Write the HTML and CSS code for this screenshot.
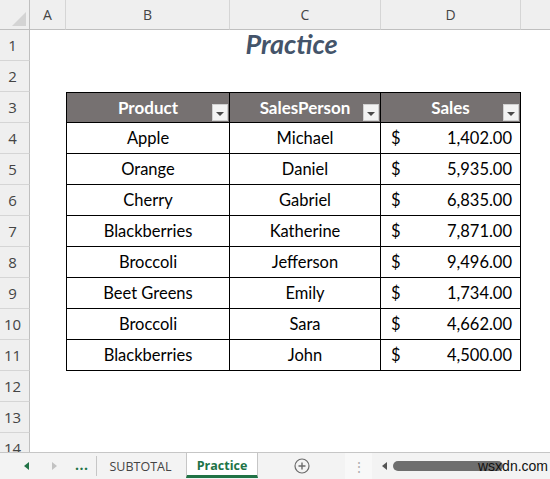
FILE: index.html
```html
<!DOCTYPE html>
<html>
<head>
<meta charset="utf-8">
<link rel="stylesheet" href="styles.css">
</head>
<body>
<div class="app">
  <div class="sheet">
    <div class="corner"><span class="tri"></span></div>
    <div class="colhead">A</div>
    <div class="colhead">B</div>
    <div class="colhead">C</div>
    <div class="colhead">D</div>
    <div class="colhead last"></div>

    <div class="rowhead">1</div>
    <div class="cell"></div>
    <div class="cell title">Practice</div>
    <div class="cell"></div>

    <div class="rowhead">2</div>
    <div class="cell full"></div>

    <div class="rowhead">3</div>
    <div class="cell"></div>
    <div class="th first">Product<span class="filter"></span></div>
    <div class="th">SalesPerson<span class="filter"></span></div>
    <div class="th">Sales<span class="filter"></span></div>
    <div class="cell"></div>

    <div class="rowhead">4</div>
    <div class="cell"></div>
    <div class="td first">Apple</div>
    <div class="td">Michael</div>
    <div class="td money"><span>$</span><span>1,402.00</span></div>
    <div class="cell"></div>

    <div class="rowhead">5</div>
    <div class="cell"></div>
    <div class="td first">Orange</div>
    <div class="td">Daniel</div>
    <div class="td money"><span>$</span><span>5,935.00</span></div>
    <div class="cell"></div>

    <div class="rowhead">6</div>
    <div class="cell"></div>
    <div class="td first">Cherry</div>
    <div class="td">Gabriel</div>
    <div class="td money"><span>$</span><span>6,835.00</span></div>
    <div class="cell"></div>

    <div class="rowhead">7</div>
    <div class="cell"></div>
    <div class="td first">Blackberries</div>
    <div class="td">Katherine</div>
    <div class="td money"><span>$</span><span>7,871.00</span></div>
    <div class="cell"></div>

    <div class="rowhead">8</div>
    <div class="cell"></div>
    <div class="td first">Broccoli</div>
    <div class="td">Jefferson</div>
    <div class="td money"><span>$</span><span>9,496.00</span></div>
    <div class="cell"></div>

    <div class="rowhead">9</div>
    <div class="cell"></div>
    <div class="td first">Beet Greens</div>
    <div class="td">Emily</div>
    <div class="td money"><span>$</span><span>1,734.00</span></div>
    <div class="cell"></div>

    <div class="rowhead">10</div>
    <div class="cell"></div>
    <div class="td first">Broccoli</div>
    <div class="td">Sara</div>
    <div class="td money"><span>$</span><span>4,662.00</span></div>
    <div class="cell"></div>

    <div class="rowhead">11</div>
    <div class="cell"></div>
    <div class="td first">Blackberries</div>
    <div class="td">John</div>
    <div class="td money"><span>$</span><span>4,500.00</span></div>
    <div class="cell"></div>

    <div class="rowhead">12</div>
    <div class="cell full"></div>
    <div class="rowhead">13</div>
    <div class="cell full"></div>
    <div class="rowhead">14</div>
    <div class="cell full"></div>
  </div>

  <div class="tabbar">
    <div class="nav">
      <span class="arrow left"></span>
      <span class="arrow right"></span>
      <span class="dots">...</span>
    </div>
    <div class="tab">SUBTOTAL</div>
    <div class="tab active">Practice</div>
    <div class="add">
      <svg width="16" height="16" viewBox="0 0 16 16"><circle cx="8" cy="8" r="7" fill="none" stroke="#6b6b6b" stroke-width="1.2"/><path d="M8 4.5v7M4.5 8h7" stroke="#6b6b6b" stroke-width="1.4"/></svg>
    </div>
    <div class="split">⋮</div>
    <div class="hscroll">
      <span class="sarrow"></span>
      <span class="thumb"></span>
    </div>
    <div class="watermark">wsxdn.com</div>
  </div>
</div>
</body>
</html>
```

FILE: styles.css
```css
* { box-sizing: border-box; }
html, body { margin: 0; padding: 0; }
body {
  width: 550px;
  height: 479px;
  overflow: hidden;
  background: #fff;
  font-family: Lato, "Liberation Sans", sans-serif;
}
.app {
  display: flex;
  flex-direction: column;
  height: 479px;
}
.sheet {
  flex: 1;
  overflow: hidden;
  display: grid;
  grid-template-columns: 30px 36px 164px 151px 140px 29px;
  grid-template-rows: 30px;
  grid-auto-rows: 31px;
}
.corner {
  background: #efefef;
  border-right: 1px solid #bfbfbf;
  border-bottom: 1px solid #bfbfbf;
  position: relative;
}
.tri {
  position: absolute;
  right: 3px;
  bottom: 3px;
  width: 0;
  height: 0;
  border-left: 14px solid transparent;
  border-bottom: 14px solid #d4d4d4;
}
.colhead {
  background: #efefef;
  border-right: 1px solid #d5d5d5;
  border-bottom: 1px solid #bfbfbf;
  color: #444;
  font-family: "Open Sans", "Noto Sans", sans-serif;
  font-size: 14px;
  display: flex;
  align-items: center;
  justify-content: center;
}
.colhead.last { border-right: none; }
.rowhead {
  background: #efefef;
  border-right: 1px solid #bfbfbf;
  border-bottom: 1px solid #d5d5d5;
  color: #444;
  font-family: "Open Sans", "Noto Sans", sans-serif;
  font-size: 15px;
  display: flex;
  align-items: center;
  justify-content: center;
  padding-right: 4px;
}
.cell { background: #fff; }
.cell.full { grid-column: 2 / span 5; }
.title {
  grid-column: 3 / span 3;
  display: flex;
  align-items: center;
  justify-content: center;
  font-size: 27px;
  font-weight: bold;
  font-style: italic;
  color: #44546a;
  padding-right: 4px;
  padding-bottom: 4px;
}
.th {
  position: relative;
  background: #767171;
  color: #fff;
  font-weight: bold;
  font-size: 17px;
  display: flex;
  align-items: center;
  justify-content: center;
  border-top: 1px solid #000;
  border-right: 1px solid #000;
  border-bottom: 1px solid #000;
  padding-bottom: 1px;
}
.th.first, .td.first { border-left: 1px solid #000; }
.filter {
  position: absolute;
  right: 1px;
  bottom: 1px;
  width: 16px;
  height: 17px;
  background: #f3f3f3;
  border: 1px solid #d0d0d0;
  display: flex;
  align-items: center;
  justify-content: center;
}
.filter::after {
  content: "";
  width: 0;
  height: 0;
  margin-top: 3px;
  border-left: 4px solid transparent;
  border-right: 4px solid transparent;
  border-top: 4px solid #4a4a4a;
}
.td {
  background: #fff;
  color: #000;
  font-size: 16.5px;
  display: flex;
  align-items: center;
  justify-content: center;
  border-right: 1px solid #000;
  border-bottom: 1px solid #000;
  padding-bottom: 1px;
}
.td.money {
  justify-content: space-between;
  padding-left: 10px;
  padding-right: 8px;
}
.tabbar {
  position: relative;
  height: 27px;
  flex: none;
  background: #f3f3f3;
  border-top: 1px solid #c6c6c6;
  display: flex;
  align-items: stretch;
  font-family: "Open Sans", "Noto Sans", sans-serif;
  font-size: 12.5px;
  color: #444;
}
.nav {
  width: 97px;
  flex: none;
  display: flex;
  align-items: center;
  padding-left: 24px;
  border-right: 1px solid #c6c6c6;
  margin: 3px 0 3px 0;
}
.arrow {
  width: 0;
  height: 0;
  border-top: 4px solid transparent;
  border-bottom: 4px solid transparent;
}
.arrow.left { border-right: 5px solid #217346; margin-right: 23px; }
.arrow.right { border-left: 5px solid #c2c2c2; margin-right: 18px; }
.dots {
  color: #217346;
  font-weight: bold;
  font-size: 14px;
  letter-spacing: 0.5px;
  margin-top: -4px;
}
.tab {
  width: 89px;
  flex: none;
  display: flex;
  align-items: center;
  justify-content: center;
  padding-right: 2px;
}
.tab.active {
  width: 72px;
  background: #fff;
  color: #217346;
  font-weight: bold;
  border-left: 1px solid #c6c6c6;
  border-right: 1px solid #c6c6c6;
  border-bottom: 3px solid #217346;
  padding: 2px 0 0 0;
  margin-bottom: 1px;
}
.add {
  width: 87px;
  flex: none;
  display: flex;
  align-items: center;
  justify-content: center;
}
.add svg { display: block; }
.split {
  width: 27px;
  flex: none;
  display: flex;
  align-items: center;
  justify-content: center;
  background: #f8f8f8;
  color: #b0b0b0;
  font-size: 14px;
}
.hscroll {
  flex: 1;
  display: flex;
  align-items: center;
  padding-left: 10px;
}
.sarrow {
  width: 0;
  height: 0;
  border-top: 4px solid transparent;
  border-bottom: 4px solid transparent;
  border-right: 5px solid #555;
  margin-right: 6px;
}
.thumb {
  width: 110px;
  height: 10px;
  border-radius: 5px;
  background: #6e6e6e;
}
.watermark {
  position: absolute;
  left: 478px;
  top: 5px;
  font-family: "Liberation Sans", Arial, sans-serif;
  font-size: 14px;
  color: #111;
}
```
